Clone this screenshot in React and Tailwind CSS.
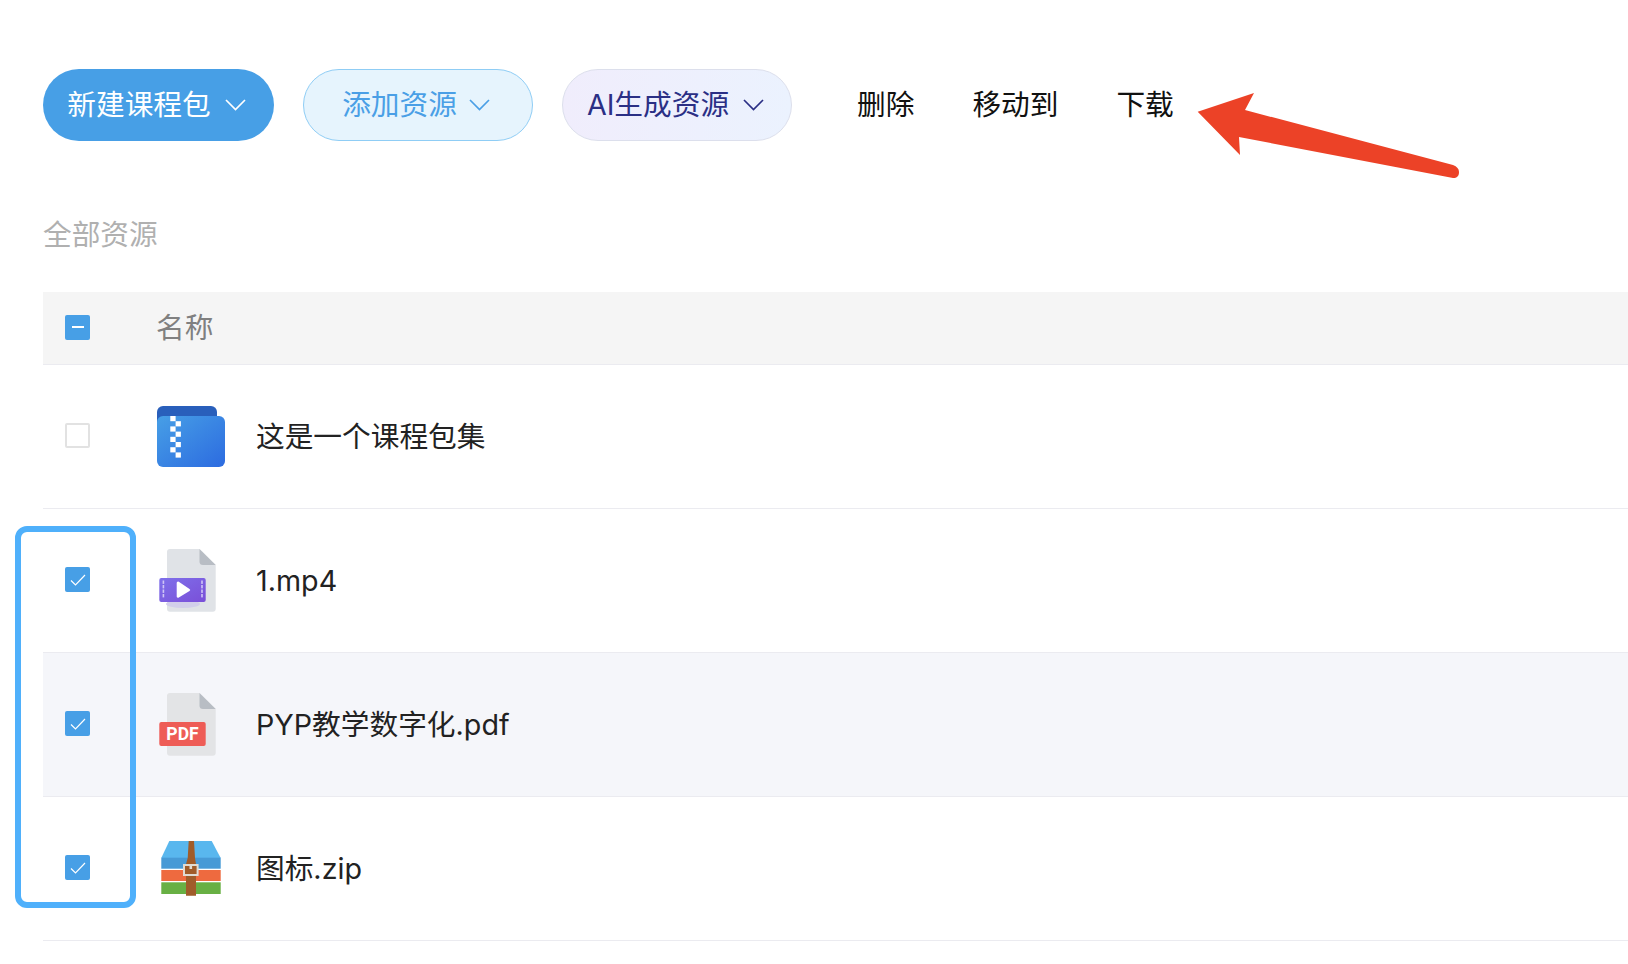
const FONT = "font-['Inter','Noto_Sans_CJK_SC',sans-serif]";

function Chevron({ color }) {
  return (
    <svg width="21" height="12" viewBox="0 0 21 12" fill="none" stroke={color} strokeWidth="1.7">
      <path d="M1 1l9.5 9.5L20 1" />
    </svg>
  );
}

function Checkbox({ state }) {
  if (state === 'none') {
    return <div className="w-[25px] h-[25px] rounded-[2px] border-2 border-[#e2e2e2] bg-white" />;
  }
  return (
    <div className="w-[25px] h-[25px] rounded-[2px] bg-[#479fe6] flex items-center justify-center">
      {state === 'some' ? (
        <div className="w-[12px] h-[2px] bg-white" />
      ) : (
        <svg width="16" height="14" viewBox="0 0 16 14" fill="none" stroke="#fff" strokeWidth="1.2">
          <path d="M1 7.5l4.5 4.5L15 2" />
        </svg>
      )}
    </div>
  );
}

function FolderIcon() {
  const left = [12, 22.4, 32.8, 43.2];
  const right = [17.2, 27.6, 38, 48.4];
  return (
    <svg width="70" height="64" viewBox="0 0 70 64">
      <defs>
        <linearGradient id="folder" x1="0" y1="0" x2="1" y2="1">
          <stop offset="0" stopColor="#479fe6" />
          <stop offset="1" stopColor="#2c6be0" />
        </linearGradient>
      </defs>
      <rect x="0" y="2" width="60" height="30" rx="6" fill="#295fbb" />
      <rect x="0" y="12" width="68" height="51" rx="6" fill="url(#folder)" />
      {left.map(y => <rect key={y} x="13.3" y={y} width="5.3" height="5.2" fill="#fff" />)}
      {right.map(y => <rect key={y} x="18.6" y={y} width="5.3" height="5.2" fill="#fff" />)}
    </svg>
  );
}

function DocBase({ fill }) {
  return (
    <>
      <path d="M13 1h29.5L58.7 17v43.7a3 3 0 0 1-3 3H13a3 3 0 0 1-3-3V4a3 3 0 0 1 3-3z" fill={fill} />
      <path d="M42.5 1L58.7 17H46a3.5 3.5 0 0 1-3.5-3.5z" fill="#b8bdc4" />
    </>
  );
}

function VideoIcon() {
  const dashes = [32.5, 37, 41.5, 46];
  return (
    <svg width="70" height="64" viewBox="0 0 70 64">
      <defs>
        <linearGradient id="video" x1="0" y1="0" x2="1" y2="1">
          <stop offset="0" stopColor="#7f70ea" />
          <stop offset="1" stopColor="#7a4fd8" />
        </linearGradient>
      </defs>
      <DocBase fill="#e0e3e7" />
      <ellipse cx="26" cy="56" rx="17" ry="4" fill="#d2cfea" />
      <rect x="2.3" y="30" width="46.4" height="24" rx="2" fill="url(#video)" />
      {dashes.map(y => (
        <g key={y} fill="#cfc6f5">
          <rect x="5.6" y={y} width="1.6" height="3.4" />
          <rect x="44.2" y={y} width="1.6" height="3.4" />
        </g>
      ))}
      <path d="M19.7 35a1.4 1.4 0 0 1 2.1-1.2L32.5 41a1.2 1.2 0 0 1 0 2l-10.7 6.6a1.4 1.4 0 0 1-2.1-1.2z" fill="#fff" />
    </svg>
  );
}

function PdfIcon() {
  return (
    <div className="relative w-[70px] h-[64px]">
      <svg width="70" height="64" viewBox="0 0 70 64">
        <DocBase fill="#e3e4e6" />
        <rect x="2.3" y="30" width="46.4" height="24" rx="2" fill="#ee5c56" />
      </svg>
      <span className="absolute left-[2px] top-[31px] w-[47px] h-[24px] flex items-center justify-center text-white text-[17.5px] font-bold font-['Roboto',sans-serif]">
        PDF
      </span>
    </div>
  );
}

function ZipIcon() {
  return (
    <svg width="70" height="64" viewBox="0 0 70 64">
      <path d="M12.3 5h42.4l9 17H4.3z" fill="#59b7ee" />
      <rect x="4.3" y="21.7" width="59.4" height="11" fill="#479ad6" />
      <rect x="4.3" y="34" width="59.4" height="11" fill="#ee6a3f" />
      <rect x="4.3" y="46.3" width="59.4" height="11.7" fill="#68b044" />
      <path d="M31.7 5h5.3l1 17 1 6v31.7H29V28l1.7-6z" fill="#a05c2a" />
      <rect x="27" y="29" width="13.6" height="10" fill="#a05c2a" stroke="#e0dcd4" strokeWidth="2" />
      <rect x="32.5" y="29" width="2.6" height="4" fill="#e0dcd4" />
    </svg>
  );
}

const ROWS = [
  { name: '这是一个课程包集', icon: <FolderIcon />, check: 'none', bg: 'bg-white' },
  { name: '1.mp4', icon: <VideoIcon />, check: 'all', bg: 'bg-white' },
  { name: 'PYP教学数字化.pdf', icon: <PdfIcon />, check: 'all', bg: 'bg-[#f5f6fa]' },
  { name: '图标.zip', icon: <ZipIcon />, check: 'all', bg: 'bg-white' },
];

export default function App() {
  return (
    <div className={`relative h-[964px] overflow-hidden bg-white pt-[69px] pl-[43px] ${FONT}`}>
      {/* Toolbar */}
      <div className="flex items-center h-[72px]">
        <button className="w-[231px] h-[72px] rounded-full bg-[#479fe6] text-white text-[28.7px] flex items-center justify-center gap-[14px] pr-[4px]">
          新建课程包 <Chevron color="#fff" />
        </button>
        <button className="ml-[29px] w-[230px] h-[72px] rounded-full bg-[#e6f4fd] border border-[#8fcdf5] text-[#4a9fe6] text-[28.7px] flex items-center justify-center gap-[12px] pr-[4px]">
          添加资源 <Chevron color="#4a9fe6" />
        </button>
        <button className="ml-[29px] w-[230px] h-[72px] rounded-full bg-gradient-to-r from-[#f0edfc] to-[#ebf2fe] border border-[#dcdfec] text-[#2b2f85] text-[28.7px] flex items-center justify-center gap-[14px] pr-[3px]">
          AI生成资源 <Chevron color="#2b2f85" />
        </button>
        <div className="ml-[65px] flex gap-[58px] text-[28.7px] text-[#111]">
          <span>删除</span>
          <span>移动到</span>
          <span>下载</span>
        </div>
      </div>

      <div className="mt-[72px] text-[28.7px] leading-[44px] text-[#b0b0b0]">全部资源</div>

      {/* Resource table */}
      <div className="mt-[35px]">
        <div className="h-[73px] pb-[2px] flex items-center bg-[#f5f5f5] border-b border-[#ebebf0]">
          <div className="w-[113px] pl-[22px]"><Checkbox state="some" /></div>
          <span className="mt-[2px] text-[28.7px] text-[#808080]">名称</span>
        </div>
        {ROWS.map(row => (
          <div key={row.name} className={`h-[144px] pb-[2px] flex items-center border-b border-[#ebebf0] ${row.bg}`}>
            <div className="w-[114px] pl-[22px]"><Checkbox state={row.check} /></div>
            <div className="w-[99px]">{row.icon}</div>
            <span className="mt-[3px] text-[28.7px] text-[#222]">{row.name}</span>
          </div>
        ))}
      </div>

      {/* Annotations */}
      <div className="absolute left-[15px] top-[526px] w-[121px] h-[382px] rounded-[12px] border-[6px] border-[#4fb0fb]" />
      <svg className="absolute left-[1190px] top-[85px]" width="280" height="100" viewBox="0 0 280 100">
        <path d="M7.7 26.7L64 8l-9 17 208 55c4 1.5 6 4 6 7 0 4-2 6-6 6L49 52l1 18z" fill="#ec4227" />
      </svg>
    </div>
  );
}
